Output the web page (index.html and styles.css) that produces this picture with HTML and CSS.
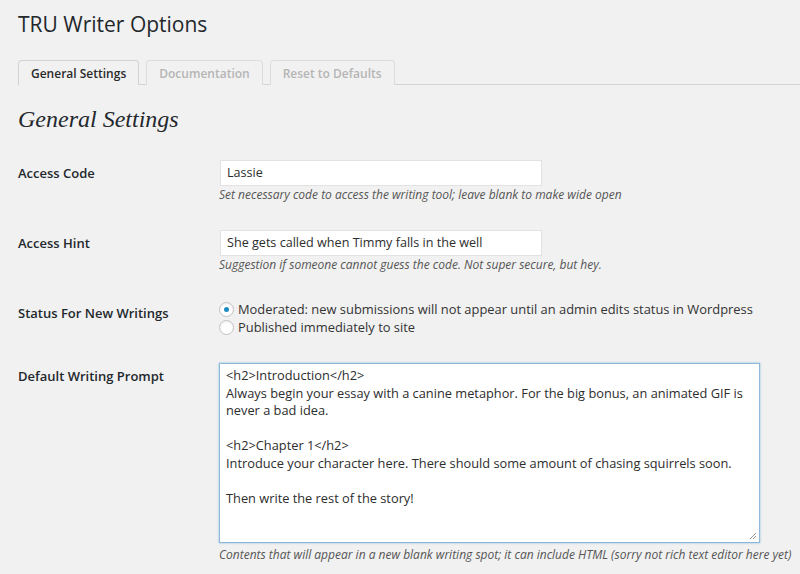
FILE: index.html
```html
<!DOCTYPE html>
<html>
<head>
<meta charset="utf-8">
<link rel="stylesheet" href="styles.css">
</head>
<body>
<div class="wrap">
  <h1 class="page-title">TRU Writer Options</h1>
  <nav class="tabs">
    <span class="tab active">General Settings</span>
    <span class="tab">Documentation</span>
    <span class="tab">Reset to Defaults</span>
  </nav>
  <h2 class="section-title">General Settings</h2>
  <div class="form">
    <div class="row">
      <div class="label">Access Code</div>
      <div class="field">
        <div class="input">Lassie</div>
        <p class="desc">Set necessary code to access the writing tool; leave blank to make wide open</p>
      </div>
    </div>
    <div class="row">
      <div class="label">Access Hint</div>
      <div class="field">
        <div class="input">She gets called when Timmy falls in the well</div>
        <p class="desc">Suggestion if someone cannot guess the code. Not super secure, but hey.</p>
      </div>
    </div>
    <div class="row">
      <div class="label">Status For New Writings</div>
      <div class="field">
        <div class="radio-line"><span class="radio checked"></span>Moderated: new submissions will not appear until an admin edits status in Wordpress</div>
        <div class="radio-line"><span class="radio"></span>Published immediately to site</div>
      </div>
    </div>
    <div class="row">
      <div class="label">Default Writing Prompt</div>
      <div class="field">
        <div class="textarea">
          <div>&lt;h2&gt;Introduction&lt;/h2&gt;</div>
          <div>Always begin your essay with a canine metaphor. For the big bonus, an animated GIF is never a bad idea.</div>
          <div class="blank">&nbsp;</div>
          <div>&lt;h2&gt;Chapter 1&lt;/h2&gt;</div>
          <div>Introduce your character here. There should some amount of chasing squirrels soon.</div>
          <div class="blank">&nbsp;</div>
          <div>Then write the rest of the story!</div>
          <svg class="grip" width="8" height="8" viewBox="0 0 8 8"><path d="M7 1 L1 7 M7 4 L4 7" stroke="#999" stroke-width="1"/></svg>
        </div>
        <p class="desc">Contents that will appear in a new blank writing spot; it can include HTML (sorry not rich text editor here yet)</p>
      </div>
    </div>
  </div>
</div>
</body>
</html>
```

FILE: styles.css
```css
html, body {
  margin: 0;
  padding: 0;
  background: #f1f1f1;
}
body {
  font-family: "Open Sans", "Noto Sans", sans-serif;
  color: #23282d;
  font-size: 13px;
  width: 800px;
  height: 574px;
  overflow: hidden;
}
.wrap {
  padding: 0 0 0 18px;
}
.page-title {
  margin: 0;
  padding: 10px 0 0;
  font-size: 21px;
  font-weight: 400;
  line-height: 29px;
  color: #23282d;
}
.tabs {
  margin-top: 21px;
  display: flex;
  gap: 7px;
  border-bottom: 1px solid #d4d4d4;
  height: 24px;
}
.tab {
  box-sizing: border-box;
  height: 25px;
  padding: 0 12px;
  border: 1px solid #dcdcdc;
  border-bottom: none;
  border-radius: 4px 4px 0 0;
  font-size: 12px;
  font-weight: 600;
  line-height: 25px;
  color: #b5b5b5;
  background: #f1f1f1;
}
.tab.active {
  color: #2b2b2b;
  border-color: #d2d2d2;
}
.section-title {
  margin: 19px 0 0;
  font-family: "Liberation Serif", "DejaVu Serif", serif;
  font-style: italic;
  font-weight: 400;
  font-size: 24px;
  line-height: 30px;
  color: #23282d;
}
.form {
  margin-top: 26px;
  display: flex;
  flex-direction: column;
  gap: 27px;
}
.row {
  display: flex;
}
.label {
  width: 201px;
  flex: none;
  font-size: 13px;
  font-weight: 600;
  line-height: 18px;
  padding-top: 4px;
  color: #23282d;
}
.field {
  flex: none;
}
.input {
  box-sizing: border-box;
  width: 322px;
  height: 26px;
  margin-left: 1px;
  background: #fff;
  border: 1px solid #e2e2e2;
  padding: 0 6px;
  font-size: 12.6px;
  line-height: 24px;
  color: #2d2d2d;
}
.desc {
  margin: 0;
  font-size: 12px;
  font-style: italic;
  line-height: 17px;
  color: #555;
}
.radio-line {
  display: flex;
  align-items: center;
  height: 18px;
  font-size: 12.9px;
  color: #333;
}
.radio {
  box-sizing: border-box;
  width: 15px;
  height: 15px;
  margin: 0 4px 0 0;
  border-radius: 50%;
  border: 1px solid #c2c2c2;
  background: #fff;
  box-shadow: inset 0 1px 2px rgba(0,0,0,0.08);
  display: flex;
  align-items: center;
  justify-content: center;
}
.radio.checked::after {
  content: "";
  width: 5px;
  height: 5px;
  border-radius: 50%;
  background: #1e8cbe;
}
.textarea {
  position: relative;
  box-sizing: border-box;
  width: 541px;
  height: 180px;
  background: #fff;
  border: 1px solid #8fb6dc;
  box-shadow: 0 0 2px rgba(30,140,190,0.5);
  padding: 3px 6px;
  font-size: 12.8px;
  line-height: 17.5px;
  color: #2d2d2d;
}
.grip {
  position: absolute;
  right: 2px;
  bottom: 2px;
}
.textarea + .desc {
  margin-top: 3px;
}
```
